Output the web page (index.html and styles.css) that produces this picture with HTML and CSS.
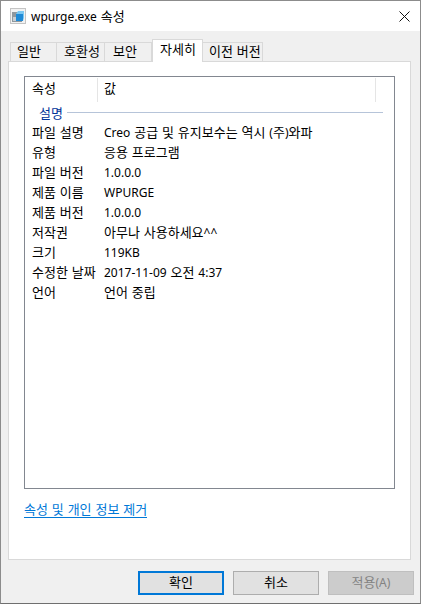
FILE: index.html
```html
<!DOCTYPE html>
<html lang="ko">
<head>
    <meta charset="UTF-8">
    <title>wpurge.exe 속성</title>
    <link rel="stylesheet" href="styles.css">
</head>
<body>
    <div class="window">
        <div class="titlebar">
            <svg class="app-icon" width="16" height="16" viewBox="0 0 16 16">
                <rect x="0.5" y="0.5" width="15" height="15" fill="#f2f2f2" stroke="#c4c4c4"/>
                <rect x="2" y="4" width="10" height="10" fill="#8f989e"/>
                <rect x="6" y="6" width="7" height="7" fill="#1f8ad6"/>
                <path d="M6 6l2-3h6v7l-1 3V6z" fill="#7cc8f2"/>
                <rect x="3" y="9" width="3" height="4" fill="#c9ced2"/>
            </svg>
            <span class="title"><span class="lat">wpurge.exe</span> 속성</span>
            <svg class="close" width="11" height="11" viewBox="0 0 11 11">
                <path d="M0.5 0.5l10 10M10.5 0.5l-10 10" stroke="#111" stroke-width="1" fill="none"/>
            </svg>
        </div>

        <div class="content">
            <div class="tabs">
                <div class="tab tab-1">일반</div>
                <div class="tab tab-2">호환성</div>
                <div class="tab tab-3">보안</div>
                <div class="tab active">자세히</div>
                <div class="tab tab-5">이전 버전</div>
            </div>

            <div class="panel">
                <div class="list">
                    <div class="list-head">
                        <div class="head-name">속성</div>
                        <div class="head-value">값</div>
                        <div class="head-end"></div>
                    </div>
                    <div class="group">
                        <span class="group-label">설명</span>
                        <span class="group-line"></span>
                    </div>
                    <div class="row"><span class="name">파일 설명</span><span><span class="lat">Creo</span> 공급 및 유지보수는 역시 <span class="lat">(</span>주<span class="lat">)</span>와파</span></div>
                    <div class="row"><span class="name">유형</span><span>응용 프로그램</span></div>
                    <div class="row"><span class="name">파일 버전</span><span class="lat">1.0.0.0</span></div>
                    <div class="row"><span class="name">제품 이름</span><span class="lat">WPURGE</span></div>
                    <div class="row"><span class="name">제품 버전</span><span class="lat">1.0.0.0</span></div>
                    <div class="row"><span class="name">저작권</span><span>아무나 사용하세요<span class="lat">^^</span></span></div>
                    <div class="row"><span class="name">크기</span><span class="lat">119KB</span></div>
                    <div class="row"><span class="name">수정한 날짜</span><span><span class="lat">2017-11-09</span> 오전 <span class="lat">4:37</span></span></div>
                    <div class="row"><span class="name">언어</span><span>언어 중립</span></div>
                </div>
                <a class="remove-link" href="#">속성 및 개인 정보 제거</a>
            </div>

            <div class="buttons">
                <div class="btn default">확인</div>
                <div class="btn">취소</div>
                <div class="btn disabled">적용<span class="lat">(A)</span></div>
            </div>
        </div>
    </div>
</body>
</html>
```

FILE: styles.css
```css
* {
    box-sizing: border-box;
}
html, body {
    margin: 0;
    height: 100%;
}
body {
    font-family: "Noto Sans", "Noto Sans CJK KR", sans-serif;
    font-size: 13px;
    word-spacing: 0.5px;
    color: #000;
    overflow: hidden;
}
.lat {
    font-size: 12px;
}
.window {
    width: 421px;
    height: 604px;
    border: 1px solid #8c8c8c;
    border-bottom-color: #6f6f6f;
    background: #f0f0f0;
    display: flex;
    flex-direction: column;
}
.titlebar {
    height: 30px;
    flex: none;
    background: #fff;
    display: flex;
    align-items: center;
    padding: 0 10px 0 9px;
}
.app-icon {
    flex: none;
    margin-right: 5px;
}
.title {
    flex: 1;
    line-height: 16px;
}
.content {
    flex: 1;
    display: flex;
    flex-direction: column;
    padding: 8px 9px 7px 7px;
}
.tabs {
    display: flex;
    height: 23px;
    flex: none;
    align-items: flex-end;
    padding-left: 2px;
    margin-bottom: -1px;
    position: relative;
}
.tab {
    height: 20px;
    border: 1px solid #d9d9d9;
    border-left-width: 0;
    background: #f0f0f0;
    padding-left: 7px;
    line-height: 17px;
    white-space: nowrap;
}
.tab-1 {
    width: 47px;
    border-left-width: 1px;
    padding-left: 6px;
}
.tab-2 {
    width: 48px;
}
.tab-3 {
    width: 47px;
    padding-left: 8px;
}
.tab-5 {
    width: 60px;
    padding-left: 6px;
}
.tab.active {
    width: 51px;
    height: 23px;
    background: #fff;
    border-left-width: 1px;
    border-bottom: 0;
    line-height: 18px;
    position: relative;
    z-index: 1;
}
.panel {
    height: 499px;
    flex: none;
    background: #fff;
    border: 1px solid #d9d9d9;
    padding: 14px 15px 0 15px;
}
.list {
    height: 413px;
    border: 1px solid #828790;
    background: #fff;
    padding-top: 1px;
}
.list-head {
    display: flex;
    height: 24px;
    line-height: 21px;
}
.head-name {
    width: 73px;
    padding-left: 7px;
    border-right: 1px solid #e5e5e5;
}
.head-value {
    width: 278px;
    padding-left: 6px;
    border-right: 1px solid #e5e5e5;
}
.group {
    display: flex;
    align-items: center;
    height: 20px;
    padding: 0 11px 0 14px;
    margin-bottom: 1px;
}
.group-label {
    color: #003399;
    margin-right: 4px;
}
.group-line {
    flex: 1;
    height: 1px;
    background: #b6c4d9;
}
.row {
    display: flex;
    height: 20px;
    line-height: 19px;
    white-space: nowrap;
}
.name {
    width: 79px;
    flex: none;
    padding-left: 7px;
}
.remove-link {
    display: inline-block;
    margin-top: 12px;
    color: #0078d7;
    line-height: 16px;
    text-decoration: none;
    border-bottom: 1px solid #0078d7;
}
.buttons {
    display: flex;
    justify-content: flex-end;
    gap: 9px;
    margin-top: 11px;
    margin-right: -3px;
}
.btn {
    width: 86px;
    height: 24px;
    background: #e1e1e1;
    border: 1px solid #adadad;
    text-align: center;
    line-height: 21px;
}
.btn.default {
    border: 2px solid #0078d7;
    line-height: 19px;
}
.btn.disabled {
    background: #cccccc;
    border-color: #bfbfbf;
    color: #838383;
}
```
